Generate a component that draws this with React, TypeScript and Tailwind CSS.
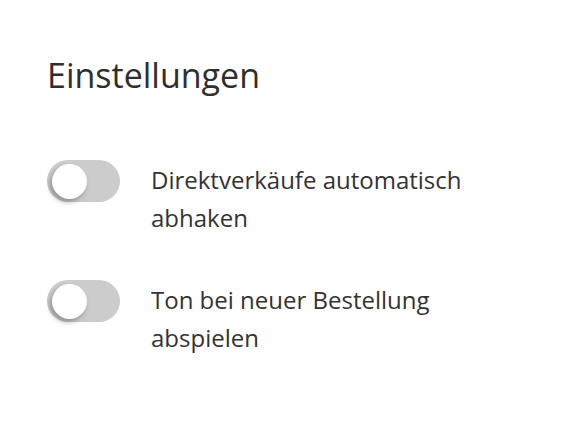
import { useState } from 'react';

function Toggle({ checked, onChange }: { checked: boolean; onChange: () => void }) {
  return (
    <button
      type="button"
      onClick={onChange}
      className={`relative shrink-0 w-[73px] h-[42px] rounded-full transition-colors ${
        checked ? 'bg-[#4caf50]' : 'bg-[#cccccc]'
      }`}
    >
      <span
        className={`absolute top-[4px] left-[5px] w-[35px] h-[35px] rounded-full bg-white shadow-[-2px_3px_5px_rgba(0,0,0,0.3)] transition-transform ${
          checked ? 'translate-x-[28px]' : ''
        }`}
      ></span>
    </button>
  );
}

export default function App() {
  const [settings, setSettings] = useState([
    { label: 'Direktverkäufe automatisch abhaken', on: false },
    { label: 'Ton bei neuer Bestellung abspielen', on: false },
  ]);

  const toggle = (i: number) =>
    setSettings((s) => s.map((x, j) => (j === i ? { ...x, on: !x.on } : x)));

  return (
    <div className="min-h-screen bg-white font-['Open_Sans',sans-serif] text-[#333333]">
      <div className="px-[47px] pt-[53px]">
        <h2 className="text-[34px] leading-[44px] text-[#2e2e2e]">Einstellungen</h2>

        <div className="mt-[63px] flex flex-col gap-[43px]">
          {settings.map((item, index) => (
            <div key={index} className="flex items-start gap-[31px]">
              <Toggle checked={item.on} onChange={() => toggle(index)} />
              <span className="text-[24px] leading-[38px] max-w-[340px] mt-[1px]">{item.label}</span>
            </div>
          ))}
        </div>
      </div>
    </div>
  );
}
